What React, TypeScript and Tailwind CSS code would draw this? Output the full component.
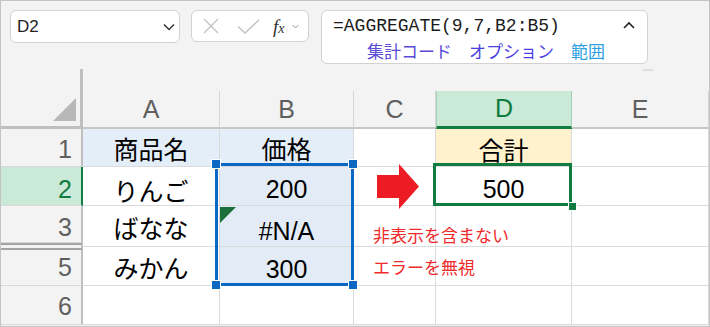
import React from "react";

type CellProps = {
  children?: React.ReactNode;
  className?: string;
};

// plain worksheet cell: gridlines on right and bottom
function Cell({ children, className = "" }: CellProps) {
  return (
    <div
      className={`relative flex items-center justify-center border-r border-b border-[#dadada] text-[25px] leading-none text-black ${className}`}
    >
      {children}
    </div>
  );
}

function RowHead({ n, active = false, className = "" }: { n: string; active?: boolean; className?: string }) {
  return (
    <div
      className={`flex items-center justify-end border-b border-b-[#d9d9d9] border-r-2 pr-[9px] text-[25px] leading-none ${
        active
          ? "border-r-[#107c41] bg-[#cae9d6] text-[#107c41]"
          : "border-r-[#bfbfbf] bg-[#f3f3f3] text-[#5f5f5f]"
      } ${className}`}
    >
      {n}
    </div>
  );
}

function ColHead({ label, active = false }: { label: string; active?: boolean }) {
  return (
    <div className="flex flex-col">
      <div className="h-[22px]" />
      {active ? (
        <div className="flex flex-1 items-center justify-center border-x border-[#9ed3b3] border-b-[3px] border-b-[#107c41] bg-[#cae9d6] text-[25px] leading-none text-[#107c41]">
          {label}
        </div>
      ) : (
        <div className="flex flex-1 items-center justify-center border-r border-r-[#d6d6d6] border-b-2 border-b-[#c6c6c6] text-[25px] leading-none text-[#5f5f5f]">
          {label}
        </div>
      )}
    </div>
  );
}

function Toolbar() {
  return (
    <div className="relative flex h-[68px] items-start pl-[9px] pt-[9px]">
      <div className="flex h-[33px] w-[170px] items-center justify-between rounded-[6px] border border-[#d2d2d2] bg-white pl-[6px] pr-[4px]">
        <span className="text-[17px] text-[#222]">D2</span>
        <svg width="12" height="8" viewBox="0 0 12 8" fill="none">
          <path d="M1 1.5 L6 6.5 L11 1.5" stroke="#333" strokeWidth="1.5" />
        </svg>
      </div>

      <div className="ml-[11px] flex h-[32px] w-[118px] items-center rounded-[6px] border border-[#d2d2d2] bg-white pl-[11px]">
        <svg width="16" height="16" viewBox="0 0 16 16" fill="none">
          <path d="M1 1 L15 15 M15 1 L1 15" stroke="#c2c2c2" strokeWidth="1.4" />
        </svg>
        <svg className="ml-[18px]" width="23" height="15" viewBox="0 0 23 15" fill="none">
          <path d="M1 7.5 L8 14 L22 1" stroke="#c2c2c2" strokeWidth="1.4" />
        </svg>
        <span className="ml-[13px] flex items-baseline font-['Liberation_Serif',serif] italic text-[#333]">
          <span className="text-[19px] leading-none">f</span>
          <span className="text-[14px] leading-none">x</span>
        </span>
        <svg className="ml-[7px]" width="7" height="5" viewBox="0 0 7 5" fill="none">
          <path d="M0.5 1 L3.5 4 L6.5 1" stroke="#9a9a9a" strokeWidth="1" />
        </svg>
      </div>

      <div className="ml-[12px] flex h-[54px] w-[327px] flex-col rounded-[6px] border border-[#d2d2d2] bg-white pl-[11px] pr-[12px] pt-[4px]">
        <div className="flex h-[22px] items-center justify-between">
          <span className="font-['Liberation_Mono',monospace] text-[18px] leading-none text-[#1b1b1b]">
            =AGGREGATE(9,7,B2:B5)
          </span>
          <svg className="mb-[3px]" width="12" height="8" viewBox="0 0 12 8" fill="none">
            <path d="M1 7 L6 2 L11 7" stroke="#222" strokeWidth="1.6" />
          </svg>
        </div>
        <div className="mt-[2px] flex h-[22px] items-center gap-[17px] pl-[34px] font-['Noto_Sans_CJK_JP',sans-serif] text-[17px] leading-none">
          <span className="text-[#5a4bd6]">集計コード</span>
          <span className="text-[#4a3fe0]">オプション</span>
          <span className="text-[#2b9fe0]">範囲</span>
        </div>
      </div>

      <div className="absolute left-[642px] top-[68px] h-[2px] w-[10px] bg-[#dcdcdc]" />
    </div>
  );
}

function Sheet() {
  return (
    <div className="relative grid grid-cols-[82px_137px_134px_82px_136px_1fr] grid-rows-[60px_38px_39px_37px_7px_36px_39px]">
      {/* header row */}
      <div className="flex items-end justify-end border-r-[3px] border-b-[3px] border-[#bfbfbf] pb-[5px] pr-[4px]">
        <svg width="23" height="23" viewBox="0 0 23 23">
          <polygon points="23,0 23,23 0,23" fill="#b8b8b8" />
        </svg>
      </div>
      <ColHead label="A" />
      <ColHead label="B" />
      <ColHead label="C" />
      <ColHead label="D" active />
      <ColHead label="E" />

      {/* row 1 */}
      <RowHead n="1" className="pt-[3px]" />
      <Cell className="bg-[#e3eef9] pt-[1px] font-['Noto_Sans_CJK_JP',sans-serif]">商品名</Cell>
      <Cell className="bg-[#e3eef9] pt-[1px] font-['Noto_Sans_CJK_JP',sans-serif]">価格</Cell>
      <Cell className="bg-white" />
      <Cell className="bg-[#fff2cc] pt-[4px] font-['Noto_Sans_CJK_JP',sans-serif]">合計</Cell>
      <Cell className="bg-white" />

      {/* row 2 */}
      <RowHead n="2" active className="pt-[6px]" />
      <Cell className="bg-white pt-[8px] font-['Noto_Sans_CJK_JP',sans-serif]">りんご</Cell>
      <Cell className="bg-[#e3ecf6] pt-[7px]">200</Cell>
      <Cell className="bg-white">
        <svg className="relative z-10 ml-[6px] shrink-0" width="42" height="45" viewBox="0 0 42 45">
          <polygon points="0,11 22,11 22,0 42,22.5 22,45 22,34 0,34" fill="#ed1c24" />
        </svg>
      </Cell>
      <Cell className="bg-white pt-[6px]">500</Cell>
      <Cell className="bg-white" />

      {/* row 3 */}
      <RowHead n="3" className="pt-[6px]" />
      <Cell className="border-b-0 bg-white pt-[6px] font-['Noto_Sans_CJK_JP',sans-serif]">ばなな</Cell>
      <Cell className="border-b-0 bg-[#e3ecf6] pt-[14px]">
        <svg className="absolute left-0 top-[1px]" width="16" height="16" viewBox="0 0 16 16">
          <polygon points="0,0 16,0 0,16" fill="#1b6f3a" />
        </svg>
        #N/A
      </Cell>
      <Cell className="items-start justify-start border-b-0 bg-white pl-[19px] pt-[20px]">
        <span className="relative z-10 whitespace-nowrap font-['Noto_Sans_CJK_JP',sans-serif] text-[17px] text-[#ee2a2a]">
          非表示を含まない
        </span>
      </Cell>
      <Cell className="border-b-0 bg-white" />
      <Cell className="border-b-0 bg-white" />

      {/* hidden row 4 */}
      <div className="border-y-2 border-y-[#a3a3a3] border-r-2 border-r-[#bfbfbf] bg-[#f3f3f3]" />
      {["bg-white", "bg-[#e3ecf6]", "bg-white", "bg-white", "bg-white"].map((bg, i) => (
        <div key={i} className={`flex items-center border-r border-[#dadada] ${bg}`}>
          <div className="h-px w-full bg-[#dadada]" />
        </div>
      ))}

      {/* row 5 */}
      <RowHead n="5" />
      <Cell className="bg-white font-['Noto_Sans_CJK_JP',sans-serif]">みかん</Cell>
      <Cell className="bg-[#e3ecf6] pt-[4px]">300</Cell>
      <Cell className="items-start justify-start bg-white pl-[19px] pt-[8px]">
        <span className="relative z-10 whitespace-nowrap font-['Noto_Sans_CJK_JP',sans-serif] text-[17px] text-[#ee2a2a]">
          エラーを無視
        </span>
      </Cell>
      <Cell className="bg-white" />
      <Cell className="bg-white" />

      {/* row 6 */}
      <RowHead n="6" className="pt-[2px]" />
      <Cell className="bg-white" />
      <Cell className="bg-white" />
      <Cell className="bg-white" />
      <Cell className="bg-white" />
      <Cell className="bg-white" />

      {/* selection B2:B5 */}
      <div className="pointer-events-none absolute left-[214px] top-[94px] z-20 h-[123px] w-[139px] border-[3px] border-[#0a68c2]">
        <div className="absolute -left-[7px] -top-[7px] h-[10px] w-[10px] border border-white bg-[#0a68c2]" />
        <div className="absolute -right-[7px] -top-[7px] h-[10px] w-[10px] border border-white bg-[#0a68c2]" />
        <div className="absolute -bottom-[7px] -left-[7px] h-[10px] w-[10px] border border-white bg-[#0a68c2]" />
        <div className="absolute -bottom-[7px] -right-[7px] h-[10px] w-[10px] border border-white bg-[#0a68c2]" />
      </div>

      {/* active cell D2 */}
      <div className="pointer-events-none absolute left-[432px] top-[94px] z-20 h-[43px] w-[139px] border-[3px] border-[#107c41]">
        <div className="absolute -bottom-[8px] -right-[8px] h-[9px] w-[9px] border border-white bg-[#107c41]" />
      </div>
    </div>
  );
}

export default function App() {
  return (
    <div className="h-[327px] w-[710px] overflow-hidden border border-[#c4c4c4] bg-[#f3f3f3] font-['Liberation_Sans','Noto_Sans_CJK_JP',sans-serif]">
      <Toolbar />
      <Sheet />
    </div>
  );
}
